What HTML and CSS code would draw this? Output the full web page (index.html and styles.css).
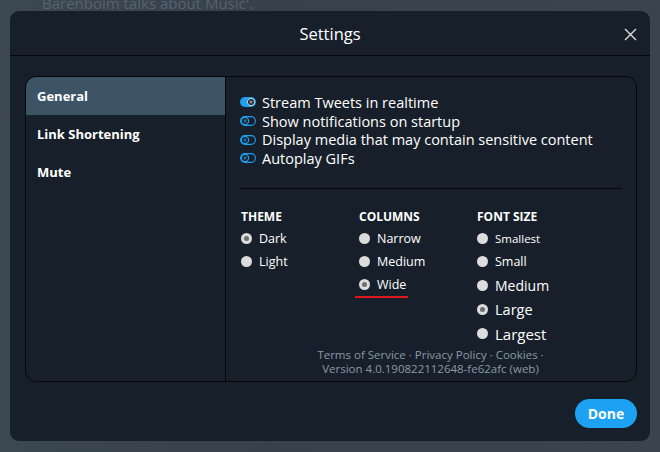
FILE: index.html
```html
<!DOCTYPE html>
<html>
<head>
<meta charset="utf-8">
<link rel="stylesheet" href="styles.css">
</head>
<body>
<div class="backdrop">
  <div class="bg-text">Barenboim talks about Music'.</div>
  <div class="modal">
    <div class="modal-header">
      <span class="title">Settings</span>
      <span class="close" aria-label="Close">
        <svg width="13" height="13" viewBox="0 0 13 13"><path d="M1 1 L12 12 M12 1 L1 12" stroke="#d9dde1" stroke-width="1.4" fill="none"/></svg>
      </span>
    </div>
    <div class="modal-body">
      <div class="panel">
        <nav class="nav">
          <div class="nav-item active">General</div>
          <div class="nav-item">Link Shortening</div>
          <div class="nav-item">Mute</div>
        </nav>
        <div class="content">
          <ul class="toggles">
            <li><svg class="tg" width="16" height="10" viewBox="0 0 16 10"><rect x="0" y="0" width="16" height="10" rx="5" fill="#1da1f2"/><circle cx="11" cy="5" r="3.6" fill="#15202b" stroke="#dfe6ec" stroke-width="0.9"/><path d="M9.6 4.2 H12.4 M9.6 5.8 H12.4" stroke="#dfe6ec" stroke-width="0.8"/></svg>Stream Tweets in realtime</li>
            <li><svg class="tg" width="16" height="10" viewBox="0 0 16 10"><rect x="0.6" y="0.6" width="14.8" height="8.8" rx="4.4" fill="none" stroke="#1da1f2" stroke-width="1.1"/><circle cx="5" cy="5" r="3.6" fill="none" stroke="#1da1f2" stroke-width="1.1"/><path d="M3.6 4.2 H6.4 M3.6 5.8 H6.4" stroke="#1da1f2" stroke-width="0.9"/></svg>Show notifications on startup</li>
            <li><svg class="tg" width="16" height="10" viewBox="0 0 16 10"><rect x="0.6" y="0.6" width="14.8" height="8.8" rx="4.4" fill="none" stroke="#1da1f2" stroke-width="1.1"/><circle cx="5" cy="5" r="3.6" fill="none" stroke="#1da1f2" stroke-width="1.1"/><path d="M3.6 4.2 H6.4 M3.6 5.8 H6.4" stroke="#1da1f2" stroke-width="0.9"/></svg>Display media that may contain sensitive content</li>
            <li><svg class="tg" width="16" height="10" viewBox="0 0 16 10"><rect x="0.6" y="0.6" width="14.8" height="8.8" rx="4.4" fill="none" stroke="#1da1f2" stroke-width="1.1"/><circle cx="5" cy="5" r="3.6" fill="none" stroke="#1da1f2" stroke-width="1.1"/><path d="M3.6 4.2 H6.4 M3.6 5.8 H6.4" stroke="#1da1f2" stroke-width="0.9"/></svg>Autoplay GIFs</li>
          </ul>
          <hr class="sep">
          <div class="options">
            <div class="group">
              <h3>Theme</h3>
              <label class="opt"><span class="radio checked"></span>Dark</label>
              <label class="opt"><span class="radio"></span>Light</label>
            </div>
            <div class="group">
              <h3>Columns</h3>
              <label class="opt"><span class="radio"></span>Narrow</label>
              <label class="opt"><span class="radio"></span>Medium</label>
              <label class="opt marked"><span class="radio checked"></span>Wide</label>
            </div>
            <div class="group">
              <h3>Font Size</h3>
              <label class="opt fs1"><span class="radio"></span>Smallest</label>
              <label class="opt fs2"><span class="radio"></span>Small</label>
              <label class="opt fs3"><span class="radio"></span>Medium</label>
              <label class="opt fs4"><span class="radio checked"></span>Large</label>
              <label class="opt fs5"><span class="radio"></span>Largest</label>
            </div>
          </div>
          <div class="legal">
            <div>Terms of Service · Privacy Policy · Cookies ·</div>
            <div>Version 4.0.190822112648-fe62afc (web)</div>
          </div>
        </div>
      </div>
    </div>
    <div class="modal-footer">
      <button class="done">Done</button>
    </div>
  </div>
</div>
</body>
</html>
```

FILE: styles.css
```css
* { box-sizing: border-box; }
html, body { margin: 0; padding: 0; }
body {
  width: 660px;
  height: 452px;
  overflow: hidden;
  font-family: "Open Sans", "Noto Sans", sans-serif;
  color: #fff;
}
.backdrop {
  position: relative;
  width: 660px;
  height: 452px;
  background: linear-gradient(90deg, #3b4751 0%, #36414b 40%, #39444e 100%);
  padding: 11px 10px;
}
.bg-text {
  position: absolute;
  left: 42px;
  top: -7px;
  font-size: 15px;
  color: #58636d;
}
.modal {
  position: relative;
  width: 640px;
  height: 430px;
  background: #17202a;
  border-radius: 9px;
  display: flex;
  flex-direction: column;
}
.modal-header {
  height: 45px;
  border-bottom: 1px solid #05080b;
  display: flex;
  align-items: center;
  justify-content: center;
  position: relative;
}
.title {
  font-size: 16.5px;
  color: #fff;
}
.close {
  position: absolute;
  right: 13px;
  top: 17px;
  display: flex;
}
.modal-body {
  padding: 20px 13px 0 15px;
}
.panel {
  height: 306px;
  border: 1px solid #05080b;
  border-radius: 11px;
  display: flex;
  overflow: hidden;
}
.nav {
  width: 200px;
  border-right: 1px solid #05080b;
  flex-shrink: 0;
}
.nav-item {
  height: 38px;
  padding-left: 11px;
  display: flex;
  align-items: center;
  font-size: 13px;
  font-weight: 700;
  color: #fff;
}
.nav-item.active {
  background: #3d5466;
}
.content {
  flex: 1;
  padding: 16px 15px 0 14px;
  display: flex;
  flex-direction: column;
}
.toggles {
  list-style: none;
  margin: 0;
  padding: 0;
}
.toggles li {
  display: flex;
  align-items: center;
  height: 18.7px;
  font-size: 14.5px;
  color: #fff;
}
.tg {
  margin-right: 6px;
  flex-shrink: 0;
}
.sep {
  border: 0;
  border-top: 1px solid #05080b;
  margin: 20px 0 0 0;
  width: 382px;
}
.options {
  display: flex;
  padding-top: 21px;
  padding-left: 1px;
}
.group {
  width: 118px;
  display: flex;
  flex-direction: column;
}
.group h3 {
  margin: 0 0 3px;
  font-size: 12px;
  font-weight: 700;
  text-transform: uppercase;
  color: #fff;
  line-height: 14px;
}
.opt {
  display: flex;
  align-items: center;
  height: 23px;
  font-size: 12.5px;
  color: #fff;
  width: fit-content;
}
.radio {
  width: 11px;
  height: 11px;
  border-radius: 50%;
  background: #dcdcdc;
  margin-right: 7px;
  flex-shrink: 0;
  position: relative;
}
.radio.checked::after {
  content: "";
  position: absolute;
  left: 3px;
  top: 3px;
  width: 5px;
  height: 5px;
  border-radius: 50%;
  background: #6f6f6f;
}
.marked {
  border-bottom: 2px solid #e0161e;
  margin-left: -4px;
  padding-left: 4px;
  padding-right: 2px;
  height: 25px;
}
.fs1 { font-size: 11.5px; height: 23px; }
.fs2 { font-size: 12.5px; height: 23px; }
.fs3 { font-size: 14px; height: 25px; }
.fs4 { font-size: 14.5px; height: 24px; }
.fs5 { font-size: 15px; height: 24px; }
.legal {
  text-align: center;
  font-size: 11.5px;
  color: #8b98a5;
  line-height: 14px;
  margin-top: 2px;
  margin-right: 1px;
}
.modal-footer {
  display: flex;
  justify-content: flex-end;
  padding: 17px 13px 0 0;
}
.done {
  width: 62px;
  height: 29px;
  border: 0;
  border-radius: 15px;
  background: #1da1f2;
  color: #fff;
  font-family: "Open Sans", "Noto Sans", sans-serif;
  font-size: 14px;
  font-weight: 700;
  padding: 0;
}
```
